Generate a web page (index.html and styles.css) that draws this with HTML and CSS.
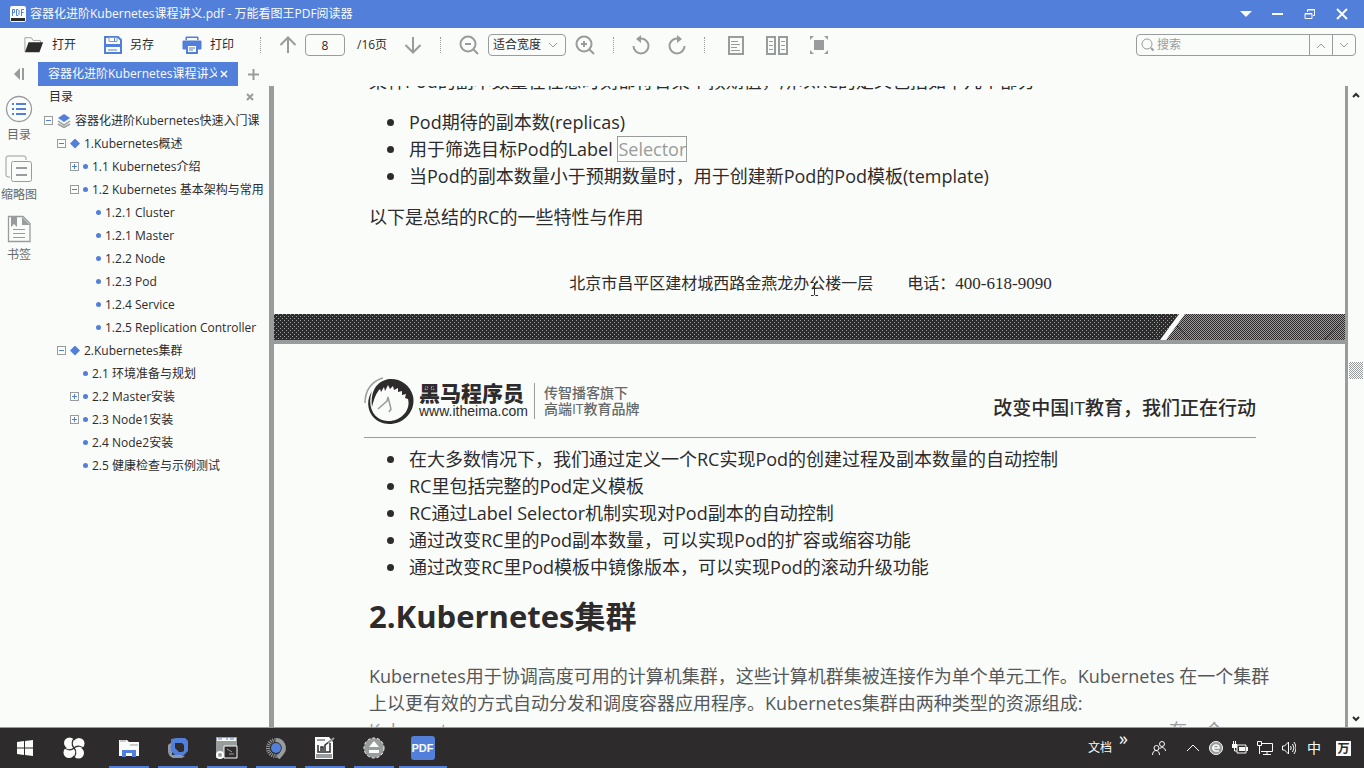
FILE: index.html
```html
<!DOCTYPE html>
<html lang="zh-CN">
<head>
<meta charset="utf-8">
<title>容器化进阶Kubernetes课程讲义.pdf - 万能看图王PDF阅读器</title>
<link rel="stylesheet" href="styles.css">
</head>
<body>
<header class="titlebar">
  <svg class="app-icon" width="16" height="16" viewBox="0 0 16 16"><rect width="16" height="16" rx="2" fill="#fafcfa"/><rect x="1" y="12" width="14" height="3" fill="#2d2b2c"/><path d="M2.500 10V3.500h2v3h-2M6.500 3.500v6h1.500l1-1V4.500l-1-1zM11.500 10V3.500H14M11.500 6.500H13.500" fill="none" stroke="#527fda"/></svg>
  <h1 class="title">容器化进阶Kubernetes课程讲义.pdf - 万能看图王PDF阅读器</h1>
  <div class="window-buttons">
    <button aria-label="菜单"><svg width="12" height="12" viewBox="0 0 12 12"><path d="M0 3h12L6 9z" fill="#fafcfa"/></svg></button>
    <button aria-label="最小化"><svg width="12" height="12" viewBox="0 0 12 12"><path d="M0 6h11" stroke="#fafcfa" stroke-width="2"/></svg></button>
    <button aria-label="还原"><svg width="12" height="12" viewBox="0 0 12 12"><path d="M1 5.500h7v5H1zM3.500 4V1.500h7v6H9M1 6h7M4 2h7" fill="none" stroke="#fafcfa"/></svg></button>
    <button aria-label="关闭"><svg width="12" height="12" viewBox="0 0 12 12"><path d="M1 1l10 10M11 1L1 11" stroke="#fafcfa" stroke-width="2"/></svg></button>
  </div>
</header>

<div class="toolbar">
  <div class="file-tools">
    <button class="tool"><svg width="20" height="18" viewBox="0 0 22 18"><path d="M1 16V1h7l2 3h8v3" fill="none" stroke="#999c9c"/><path d="M1 17L5 6h16l-4 11z" fill="#2d2b2c"/></svg>打开</button>
    <button class="tool"><svg width="18" height="18" viewBox="0 0 18 18"><path d="M1 1h13l3 3v13H1z" fill="none" stroke="#527fda" stroke-width="2"/><path d="M5 1.500h8v4H5z" fill="#fafcfa" stroke="#999c9c"/><path d="M1 8h16v3H1z" fill="#527fda"/><path d="M4 14h9M10.500 2v3" stroke="#527fda" stroke-width="1"/></svg>另存</button>
    <button class="tool"><svg width="20" height="18" viewBox="0 0 20 18"><path d="M4 4V1h12v3M1 5h18v8H1z" fill="#527fda" stroke="#527fda"/><path d="M5 2h10v2H5z" fill="#fafcfa"/><path d="M5 9h10v8H5z" fill="#fafcfa" stroke="#527fda" stroke-width="2"/><path d="M7 12h6M7 14h4" stroke="#527fda"/></svg>打印</button>
  </div>
  <i class="sep"></i>
  <button class="icon-btn" aria-label="上一页"><svg width="18" height="18" viewBox="0 0 18 18"><path d="M9 17V2M1.500 9L9 1.500 16.500 9"/></svg></button>
  <input class="page-input" aria-label="页码" value="8">
  <span class="page-total">/16页</span>
  <button class="icon-btn" aria-label="下一页"><svg width="18" height="18" viewBox="0 0 18 18"><path d="M9 1v15M1.500 9L9 16.500 16.500 9"/></svg></button>
  <i class="sep"></i>
  <div class="zoom-tools">
    <button class="icon-btn" aria-label="缩小"><svg width="20" height="20" viewBox="0 0 20 20"><circle cx="9" cy="9" r="7.500"/><path d="M6 9h6M14.500 14.500L19 19"/></svg></button>
    <span class="select-wrap"><select aria-label="缩放"><option>适合宽度</option></select><svg width="10" height="7" viewBox="0 0 10 7"><path d="M1 1l4 4 4-4" fill="none" stroke="#999c9c"/></svg></span>
    <button class="icon-btn" aria-label="放大"><svg width="20" height="20" viewBox="0 0 20 20"><circle cx="9" cy="9" r="7.500"/><path d="M6 9h6M9 6v6M14.500 14.500L19 19"/></svg></button>
  </div>
  <i class="sep"></i>
  <div class="rotate-tools">
    <button class="icon-btn" aria-label="向左旋转"><svg width="18" height="20" viewBox="0 0 18 20"><path d="M1.500 11a7.500 7.500 0 1 0 7.500-7.500H6"/><path d="M9 0v8L4 4z" fill="#999c9c" stroke="none"/></svg></button>
    <button class="icon-btn" aria-label="向右旋转"><svg width="18" height="20" viewBox="0 0 18 20"><path d="M16.500 11A7.500 7.500 0 1 1 9 3.500h3"/><path d="M9 0v8l5-4z" fill="#999c9c" stroke="none"/></svg></button>
  </div>
  <i class="sep"></i>
  <div class="view-tools">
    <button class="icon-btn" aria-label="单页"><svg width="16" height="19" viewBox="0 0 16 19"><path d="M1 1h14v17H1z"/><path d="M3 5.500h7M3 8.500h9M3 11.500h6M3 14.500h9" stroke-width="1"/></svg></button>
    <button class="icon-btn" aria-label="双页"><svg width="22" height="19" viewBox="0 0 22 19"><path d="M1 1h8v17H1zM13 1h8v17h-8z"/><path d="M3 5.500h4M3 9.500h4M3 13.500h4M15 5.500h4M15 9.500h4M15 13.500h4" stroke-width="1"/></svg></button>
    <button class="icon-btn" aria-label="全屏"><svg width="18" height="18" viewBox="0 0 18 18"><path d="M5 5h8v8H5z" fill="#999c9c"/><path d="M0 4V0h4zM14 0h4v4zM18 14v4h-4zM4 18H0v-4z" fill="#999c9c" stroke="none"/></svg></button>
  </div>
  <div class="search">
    <svg class="search-icon" width="14" height="14" viewBox="0 0 14 14"><circle cx="6" cy="6" r="5" fill="none" stroke="#999c9c"/><path d="M10 10l2.500 2.500" stroke="#999c9c" stroke-width="2"/></svg>
    <input aria-label="搜索" placeholder="搜索">
    <button aria-label="上一个"><svg width="10" height="7" viewBox="0 0 10 7"><path d="M1 6l4-4 4 4" fill="none" stroke="#999c9c"/></svg></button>
    <button aria-label="下一个"><svg width="10" height="7" viewBox="0 0 10 7"><path d="M1 1l4 4 4-4" fill="none" stroke="#999c9c"/></svg></button>
  </div>
</div>

<nav class="tabs">
  <button class="collapse" aria-label="收起"><svg width="12" height="12" viewBox="0 0 12 12"><path d="M7 0v12L1 6z" fill="#999c9c"/><path d="M10 0v12" stroke="#999c9c" stroke-width="2"/></svg></button>
  <div class="tab"><span class="tab-name">容器化进阶Kubernetes课程讲义</span><button aria-label="关闭标签"><svg width="8" height="8" viewBox="0 0 8 8"><path d="M1 1l6 6M7 1L1 7" stroke="#fafcfa" stroke-width="1.500"/></svg></button></div>
  <button class="add" aria-label="新标签"><svg width="11" height="11" viewBox="0 0 11 11"><path d="M5.500 0v11M0 5.500h11" stroke="#999c9c" stroke-width="2"/></svg></button>
</nav>

<div class="workspace">
  <nav class="rail">
    <button><svg width="28" height="28" viewBox="0 0 28 28"><circle cx="14" cy="14" r="12.500" fill="none" stroke="#999c9c" stroke-width="1.300"/><path d="M7 9h2M11 9h10M7 14h2M11 14h10M7 19h2M11 19h10" stroke="#527fda" stroke-width="2"/></svg><span>目录</span></button>
    <button><svg width="28" height="28" viewBox="0 0 28 28"><g fill="none" stroke="#999c9c"><path d="M5 22H3q-2 0-2-2V3q0-2 2-2h16q2 0 2 2v2"/><rect x="6.500" y="6.500" width="20" height="20" rx="2"/><path d="M11 13h11M11 20h11" stroke-width="2"/></g></svg><span>缩略图</span></button>
    <button><svg width="28" height="28" viewBox="0 0 28 28"><path d="M3.500 1.500H18l7 7v18H3.500z" fill="none" stroke="#999c9c" stroke-width="1.300"/><path d="M6 2h6v10L9 9l-3 3zM17 2l8 8h-8z" fill="#999c9c"/><path d="M8 14.500h12M8 18.500h12M8 22.500h12" stroke="#999c9c"/></svg><span>书签</span></button>
  </nav>

  <aside class="outline">
    <div class="outline-head"><h2>目录</h2><button aria-label="关闭目录"><svg width="8" height="8" viewBox="0 0 8 8"><path d="M1 1l6 6M7 1L1 7" stroke="#999c9c" stroke-width="2"/></svg></button></div>
    <ul class="tree">
      <li><div class="row"><button class="fold" aria-label="折叠"></button><svg class="book" width="14" height="14" viewBox="0 0 14 14"><path d="M7 0l6 4-6 4-6-4z" fill="#527fda"/><path d="M1 7l6 4 6-4M1 10l6 3.500L13 10" fill="none" stroke="#999c9c" stroke-width="1.500"/></svg><a href="#k">容器化进阶Kubernetes快速入门课</a></div>
        <ul>
          <li><div class="row"><button class="fold" aria-label="折叠"></button><i class="diamond"></i><a href="#k1">1.Kubernetes概述</a></div>
            <ul>
              <li><div class="row"><button class="fold closed" aria-label="展开"></button><i class="dot"></i><a href="#k11">1.1 Kubernetes介绍</a></div></li>
              <li><div class="row"><button class="fold" aria-label="折叠"></button><i class="dot"></i><a href="#k12">1.2 Kubernetes 基本架构与常用</a></div>
                <ul>
                  <li><div class="row leaf"><i class="dot"></i><a href="#c1">1.2.1 Cluster</a></div></li>
                  <li><div class="row leaf"><i class="dot"></i><a href="#c2">1.2.1 Master</a></div></li>
                  <li><div class="row leaf"><i class="dot"></i><a href="#c3">1.2.2 Node</a></div></li>
                  <li><div class="row leaf"><i class="dot"></i><a href="#c4">1.2.3 Pod</a></div></li>
                  <li><div class="row leaf"><i class="dot"></i><a href="#c5">1.2.4 Service</a></div></li>
                  <li><div class="row leaf"><i class="dot"></i><a href="#c6">1.2.5 Replication Controller</a></div></li>
                </ul></li>
            </ul></li>
          <li><div class="row current"><button class="fold" aria-label="折叠"></button><i class="diamond"></i><a href="#cluster">2.Kubernetes集群</a></div>
            <ul>
              <li><div class="row leaf"><i class="dot"></i><a href="#d1">2.1 环境准备与规划</a></div></li>
              <li><div class="row"><button class="fold closed" aria-label="展开"></button><i class="dot"></i><a href="#d2">2.2 Master安装</a></div></li>
              <li><div class="row"><button class="fold closed" aria-label="展开"></button><i class="dot"></i><a href="#d3">2.3 Node1安装</a></div></li>
              <li><div class="row leaf"><i class="dot"></i><a href="#d4">2.4 Node2安装</a></div></li>
              <li><div class="row leaf"><i class="dot"></i><a href="#d5">2.5 健康检查与示例测试</a></div></li>
            </ul></li>
        </ul></li>
    </ul>
  </aside>
  <div class="splitter"></div>

  <main class="viewer">
    <section class="page page-first">
      <p>某种Pod的副本数量在任意时刻都符合某个预期值，所以RC的定义包括如下几个部分</p>
      <ul class="bullets">
        <li>Pod期待的副本数(replicas)</li>
        <li>用于筛选目标Pod的Label <mark>Selector</mark></li>
        <li>当Pod的副本数量小于预期数量时，用于创建新Pod的Pod模板(template)</li>
      </ul>
      <p>以下是总结的RC的一些特性与作用</p>
      <footer class="page-foot"><span>北京市昌平区建材城西路金燕龙办公楼一层</span><span>电话：<span class="phone">400-618-9090</span></span>
        <svg class="caret" width="9" height="14" viewBox="0 0 9 14"><path d="M1 .5h2.500l1 1 1-1H8M1 13.500h2.500l1-1 1 1H8M4.500 1v12" fill="none" stroke="#2d2b2c"/></svg></footer>
    </section>
    <div class="band">
      <div class="band-dark"></div>
      <svg width="188" height="26" viewBox="0 0 188 26">
        <defs><pattern id="dots" width="4" height="4" patternUnits="userSpaceOnUse"><rect width="4" height="4" fill="#2d2b2c"/><path d="M0 0h1v1H0zM2 2h1v1H2z" fill="#999c9c"/></pattern>
        <pattern id="check" width="2" height="2" patternUnits="userSpaceOnUse"><rect width="2" height="2" fill="#2d2b2c"/><path d="M0 0h1v1H0zM1 1h1v1H1z" fill="#999c9c"/></pattern></defs>
        <path d="M0 0h22L3 26H0z" fill="url(#dots)"/><path d="M28 0h160v26H9z" fill="url(#check)"/><path d="M20 12l14 15M188 4l-21 22" stroke="#2d2b2c" stroke-dasharray="2 1" fill="none"/>
      </svg>
    </div>
    <section class="page page-second">
      <header class="page-head">
        <svg class="horse" width="50" height="48" viewBox="0 0 50 48"><path d="M8 14C-2 30 9 47 25 47s27-14 24-28C46 7 35 1 25 2c-6 1-11 4-14 9-3 5-4 12-3 19 2-8 4-14 8-18l1 3 3-5 1 4 3-6 2 4 3-3 1 4 4-2v4l4-1v4l4-1-1 4 3 1c3 11-7 22-19 22C12 45 2 32 8 14z" fill="#2d2b2c"/><path d="M1 26C1 13 8 4 19 1M14 32l9-8 1-4 3 12-2 3" fill="none" stroke="#999c9c" stroke-width="1.500"/></svg>
        <div class="brand"><strong>黑马程序员</strong><span>www.itheima.com</span></div>
        <div class="tagline"><span>传智播客旗下</span><span>高端IT教育品牌</span></div>
        <p class="slogan">改变中国IT教育，我们正在行动</p>
      </header>
      <ul class="bullets">
        <li>在大多数情况下，我们通过定义一个RC实现Pod的创建过程及副本数量的自动控制</li>
        <li>RC里包括完整的Pod定义模板</li>
        <li>RC通过Label Selector机制实现对Pod副本的自动控制</li>
        <li>通过改变RC里的Pod副本数量，可以实现Pod的扩容或缩容功能</li>
        <li>通过改变RC里Pod模板中镜像版本，可以实现Pod的滚动升级功能</li>
      </ul>
      <h2 id="cluster">2.Kubernetes集群</h2>
      <p class="body-text">Kubernetes用于协调高度可用的计算机集群，这些计算机群集被连接作为单个单元工作。Kubernetes 在一个集群<br>上以更有效的方式自动分发和调度容器应用程序。Kubernetes集群由两种类型的资源组成:</p>
      <p class="faded"><span>Kubernetes</span><span>在一个</span></p>
    </section>
  </main>
  <div class="scrollbar"><svg width="8" height="6" viewBox="0 0 8 6"><path d="M1 5l3-3 3 3" fill="none" stroke="#2d2b2c" stroke-width="2"/></svg><div class="thumb"></div><svg width="8" height="6" viewBox="0 0 8 6"><path d="M1 1l3 3 3-3" fill="none" stroke="#2d2b2c" stroke-width="2"/></svg></div>
</div>

<footer class="taskbar">
  <div class="start">
    <button aria-label="开始"><svg width="16" height="16" viewBox="0 0 16 16"><path d="M0 2l7-1v6.500H0zM8 1l8-1v7.500H8zM0 8.500h7V15l-7-1zM8 8.500h8V16l-8-1z" fill="#fafcfa"/></svg></button>
    <button aria-label="浏览器"><svg width="22" height="22" viewBox="0 0 22 22"><g fill="#fafcfa"><circle cx="6.500" cy="6" r="5.500"/><circle cx="16" cy="6.500" r="5.500"/><circle cx="6" cy="15.500" r="5.500"/><circle cx="15.500" cy="16" r="5.500"/><circle cx="11" cy="11" r="4"/></g><path d="M11 11C8 8 9 3 12 1M11 11c3-3 8-2 10 1M11 11c3 3 2 8-1 10M11 11c-3 3-8 2-10-1" fill="none" stroke="#2d2b2c" stroke-width="1.200"/></svg></button>
  </div>
  <div class="apps">
    <button aria-label="文件资源管理器"><svg width="22" height="22" viewBox="0 0 22 22"><path d="M1 3h8l2 2h10v14H1z" fill="#fafcfa"/><path d="M2 4h6M12 8h8" stroke="#999c9c"/><path d="M4 20v-7h14v7h-4v-4H8v4z" fill="#527fda"/></svg></button>
    <button aria-label="虚拟机"><svg width="22" height="22" viewBox="0 0 22 22"><path d="M1 8l4-3v13h9l4 1-3 2H6q-5-2-5-7z" fill="#999c9c"/><path d="M4 2L9 1h9l3 3v10l-4 4H8l-4-4z" fill="#527fda"/><path d="M8 6h7l2 2v6l-2 1h-3l-4-4z" fill="#2d2b2c"/><path d="M3 9v7l5 4h7" fill="none" stroke="#527fda" stroke-dasharray="1 1"/></svg></button>
    <button aria-label="终端"><svg width="24" height="24" viewBox="0 0 24 24"><path d="M1 1h21v21H1z" fill="#999c9c"/><path d="M2 2h19v3H2z" fill="#fafcfa"/><path d="M3 3h4M11 3h2M15 3h4" stroke="#527fda"/><path d="M9 10h13v12H9z" fill="#2d2b2c" stroke="#fafcfa"/><path d="M12 13l5 3M14 18h5" stroke="#999c9c"/><circle cx="5" cy="19" r="3" fill="none" stroke="#fafcfa" stroke-width="2"/></svg></button>
    <button aria-label="Chrome"><svg width="22" height="22" viewBox="0 0 22 22"><circle cx="11" cy="11" r="8" fill="none" stroke="#999c9c" stroke-width="4" stroke-dasharray="1 1"/><path d="M11 3a8 8 0 0 1 6 13l-4 5" fill="none" stroke="#999c9c" stroke-width="4"/><circle cx="11" cy="11" r="5" fill="#527fda"/></svg></button>
    <button aria-label="编辑器"><svg width="22" height="24" viewBox="0 0 22 24"><path d="M1 1h14l4 5v17H1z" fill="#fafcfa"/><path d="M4 9v7h12V7M7 15v-4h2v4M11 15V9l5-4" fill="none" stroke="#2d2b2c" stroke-width="1.500"/><path d="M14 7l6-5M3 4h8" stroke="#999c9c" stroke-width="2"/><path d="M2 18h16v4H2z" fill="#999c9c"/></svg></button>
    <button aria-label="媒体"><svg width="22" height="22" viewBox="0 0 22 22"><circle cx="11" cy="11" r="10" fill="#999c9c" stroke="#fafcfa" stroke-dasharray="3 2"/><path d="M11 4l5 6H6zM6 13h10v3H6z" fill="#fafcfa"/></svg></button>
    <button class="active" aria-label="PDF阅读器"><span class="pdf-tile">PDF</span></button>
  </div>
  <div class="tray">
    <span class="docs">文档</span><span class="more">»</span>
    <svg class="people" width="14" height="16" viewBox="0 0 14 16"><g fill="none" stroke="#fafcfa"><circle cx="10" cy="4" r="2.500"/><circle cx="4.500" cy="8" r="2.500"/><path d="M.5 15c0-6 7-6 7 0M7.500 9c2-3 6-1 6 2"/></g></svg>
    <div class="tray-icons">
      <svg width="14" height="14" viewBox="0 0 14 14"><path d="M1 10l6-6 6 6" fill="none" stroke="#fafcfa"/></svg>
      <svg width="14" height="14" viewBox="0 0 14 14"><circle cx="7" cy="7" r="6.500" fill="#999c9c" stroke="#fafcfa"/><path d="M3 7h7q0-3-3-3T4 7t3 3h3" fill="none" stroke="#fafcfa" stroke-width="1.500"/></svg>
      <svg width="16" height="14" viewBox="0 0 16 14"><path d="M5 4h9v8H5z" fill="none" stroke="#fafcfa"/><path d="M7 6h6v4H7zM14 6h2v4h-2zM0 3h5v4H0zM1 0h1v3H1zM3 0h1v3H3z" fill="#fafcfa"/><path d="M2.500 6v4H5" fill="none" stroke="#fafcfa"/></svg>
      <svg width="16" height="14" viewBox="0 0 16 14"><path d="M4 2.500h11.500v8H4M10 10v3M6 13.500h8M.5.500h4v4h-4zM2.500 4v9" fill="none" stroke="#fafcfa"/></svg>
      <svg width="14" height="14" viewBox="0 0 14 14"><path d="M.5 5h2l4-4v12l-4-4h-2zM8.500 5q1.500 2 0 4M10.500 3q3 4 0 8M12 1q4 6 0 12" fill="none" stroke="#fafcfa"/></svg>
    </div>
    <span class="ime">中</span><span class="wan">万</span>
  </div>
</footer>
</body>
</html>
```
FILE: styles.css
```css
:root {
  --paper: #fafcfa;
  --blue: #527fda;
  --gray: #999c9c;
  --ink: #2d2b2c;
}
* { box-sizing: border-box; }
body {
  margin: 0;
  height: 100vh;
  display: flex;
  flex-direction: column;
  overflow: hidden;
  background: var(--paper);
  color: var(--ink);
  font: 12px/16px "Open Sans", "Noto Sans CJK SC", sans-serif;
}
button, input, select { font: inherit; color: inherit; }
button {
  display: flex;
  align-items: center;
  justify-content: center;
  padding: 0;
  border: 0;
  background: none;
}
a { color: inherit; text-decoration: none; }
ul { margin: 0; padding: 0; list-style: none; }
h1, h2, p { margin: 0; font-size: inherit; font-weight: inherit; }
svg { flex: none; display: block; }

.titlebar {
  flex: none;
  display: flex;
  align-items: center;
  height: 28px;
  padding: 0 16px 0 10px;
  gap: 4px;
  background: var(--blue);
  color: var(--paper);
}
.title { flex: 1; }
.window-buttons { display: flex; gap: 20px; }

.toolbar {
  flex: none;
  display: flex;
  align-items: center;
  height: 34px;
  padding: 0 8px 0 24px;
}
.file-tools { display: flex; gap: 28px; width: 236px; }
.tool { gap: 8px; }
.sep { flex: none; height: 16px; border-left: 1px dotted var(--gray); }
.icon-btn { flex: none; }
.icon-btn svg { fill: none; stroke: var(--gray); stroke-width: 2; }
.sep + .icon-btn { margin-left: 18px; }
.page-input {
  width: 40px;
  height: 22px;
  margin: 0 12px 0 8px;
  padding: 0;
  border: 1px solid var(--gray);
  border-radius: 4px;
  background: none;
  text-align: center;
}
.page-total { width: 47px; }
.icon-btn + .sep { margin-left: 18px; }
.zoom-tools { display: flex; align-items: center; gap: 9px; padding: 0 18px; }
.select-wrap { position: relative; }
.select-wrap select {
  display: block;
  width: 78px;
  height: 22px;
  padding: 0 0 0 4px;
  appearance: none;
  border: 1px solid var(--gray);
  border-radius: 4px;
  background: none;
}
.select-wrap svg { position: absolute; right: 8px; top: 8px; pointer-events: none; }
.rotate-tools { display: flex; gap: 18px; padding: 0 18px; }
.view-tools { display: flex; align-items: center; gap: 22px; padding-left: 23px; }
.search {
  display: flex;
  align-items: center;
  width: 220px;
  height: 22px;
  margin-left: auto;
  padding-left: 4px;
  border: 1px solid var(--gray);
  border-radius: 4px;
}
.search input { flex: 1; min-width: 0; padding: 0 2px; border: 0; outline: 0; background: none; }
.search input::placeholder { color: var(--gray); }
.search button { width: 23px; height: 20px; border-left: 1px solid var(--gray); }

.tabs { flex: none; display: flex; height: 24px; }
.collapse { width: 38px; }
.tab {
  display: flex;
  align-items: center;
  gap: 3px;
  width: 200px;
  padding: 0 10px;
  background: var(--blue);
  color: var(--paper);
}
.tab-name { flex: 1; overflow: hidden; white-space: nowrap; }
.add { width: 30px; }

.workspace { flex: 1; min-height: 0; display: flex; }
.rail { flex: none; display: flex; flex-direction: column; gap: 12px; width: 38px; padding-top: 9px; color: #666969; }
.rail button { flex-direction: column; gap: 4px; white-space: nowrap; }
.outline { flex: none; width: 231px; overflow: hidden; }
.outline-head { display: flex; justify-content: space-between; height: 23px; padding: 3px 15px 4px 11px; }
.tree { padding-left: 6px; }
.tree ul { padding-left: 13px; }
.row { display: flex; align-items: center; gap: 4px; height: 23px; white-space: nowrap; }
.leaf { padding-left: 13px; }
.fold {
  flex: none;
  width: 9px;
  height: 9px;
  border: 1px solid var(--gray);
  background: linear-gradient(var(--blue), var(--blue)) center / 5px 1px no-repeat;
}
.closed {
  background:
    linear-gradient(var(--blue), var(--blue)) center / 5px 1px no-repeat,
    linear-gradient(var(--blue), var(--blue)) center / 1px 5px no-repeat;
}
.dot { flex: none; width: 5px; height: 5px; border-radius: 50%; background: var(--blue); }
.diamond {
  flex: none;
  width: 10px;
  height: 10px;
  background: var(--blue);
  clip-path: polygon(50% 0, 100% 50%, 50% 100%, 0 50%);
}
.splitter { flex: none; width: 5px; background: var(--gray); }

.viewer {
  flex: 1;
  min-width: 0;
  overflow: hidden;
  border-right: 3px solid var(--gray);
  font-size: 18px;
  line-height: 27px;
}
.page { padding: 0 89px 0 95px; }
.page p { white-space: nowrap; }
.page-first { margin-top: -18px; }
.bullets { padding: 14px 0 14px 40px; }
.bullets li { position: relative; white-space: nowrap; }
.bullets li::before {
  content: "";
  position: absolute;
  left: -22px;
  top: 10px;
  width: 7px;
  height: 7px;
  border-radius: 50%;
  background: var(--ink);
}
mark { border: 1px solid var(--gray); background: none; color: var(--gray); }
.page-foot {
  position: relative;
  display: flex;
  justify-content: center;
  gap: 34px;
  padding: 39px 4px 17px 0;
  font: 16px/27px "Liberation Serif", "Noto Sans CJK SC", serif;
}
.phone { font-size: 17px; }
.caret { position: absolute; left: 441px; top: 51px; }
.band { display: flex; border-bottom: 4px solid var(--gray); }
.band-dark {
  flex: 1;
  background:
    conic-gradient(from 270deg at 1px 1px, var(--gray) 90deg, transparent 0) 0 0 / 4px 4px,
    conic-gradient(from 270deg at 1px 1px, var(--gray) 90deg, transparent 0) 2px 2px / 4px 4px,
    var(--ink);
}
.page-head {
  display: flex;
  align-items: center;
  height: 94px;
  margin: 0 0 0 -5px;
  padding-top: 20px;
  border-bottom: 1px solid var(--gray);
}
.brand { display: flex; flex-direction: column; margin-left: 5px; padding-right: 6px; border-right: 1px solid var(--gray); }
.brand strong { font-size: 21px; line-height: 20px; font-weight: 900; }
.brand span { font: 14px/16px "Liberation Sans", sans-serif; }
.tagline { display: flex; flex-direction: column; margin-left: 9px; font-size: 14px; line-height: 16px; font-weight: 500; color: #666969; }
.slogan { margin-left: auto; font-size: 19px; font-weight: 500; padding-top: 16px; }
.page-second .bullets { padding-top: 8px; }
.page h2 { margin: 5px 0 31px; font-size: 31px; line-height: 32px; font-weight: 700; }
.body-text { color: #555858; }
.faded { display: flex; justify-content: space-between; padding-right: 33px; color: var(--gray); }
.scrollbar { flex: none; display: flex; flex-direction: column; align-items: center; width: 16px; padding: 6px 0 5px; }
.thumb { width: 14px; height: 17px; margin: 264px 0 auto; background: repeating-conic-gradient(var(--gray) 0 25%, var(--paper) 0 50%) 0 0 / 2px 2px; }

.taskbar { flex: none; display: flex; height: 41px; border-top: 1px solid var(--gray); background: var(--ink); color: var(--paper); }
.start { display: flex; margin-right: 6px; }
.start button, .apps button { width: 49px; }
.apps { display: flex; }
.apps button { background: linear-gradient(var(--blue), var(--blue)) center bottom / 40px 2px no-repeat; }
.apps .active { background-size: 48px 2px; }
.pdf-tile { padding: 3px 1px; border-radius: 3px; background: var(--blue); font: 700 11px/18px "Liberation Sans", sans-serif; }
.tray { display: flex; align-items: center; margin-left: auto; padding-right: 13px; }
.more { padding: 0 24px 20px 7px; font-size: 18px; }
.people { margin-right: 20px; }
.tray-icons { display: flex; gap: 9px; }
.ime { margin: 0 15px 0 11px; font-size: 14px; }
.wan { width: 15px; background: var(--paper); color: var(--ink); line-height: 15px; text-align: center; font-weight: 700; }
```
